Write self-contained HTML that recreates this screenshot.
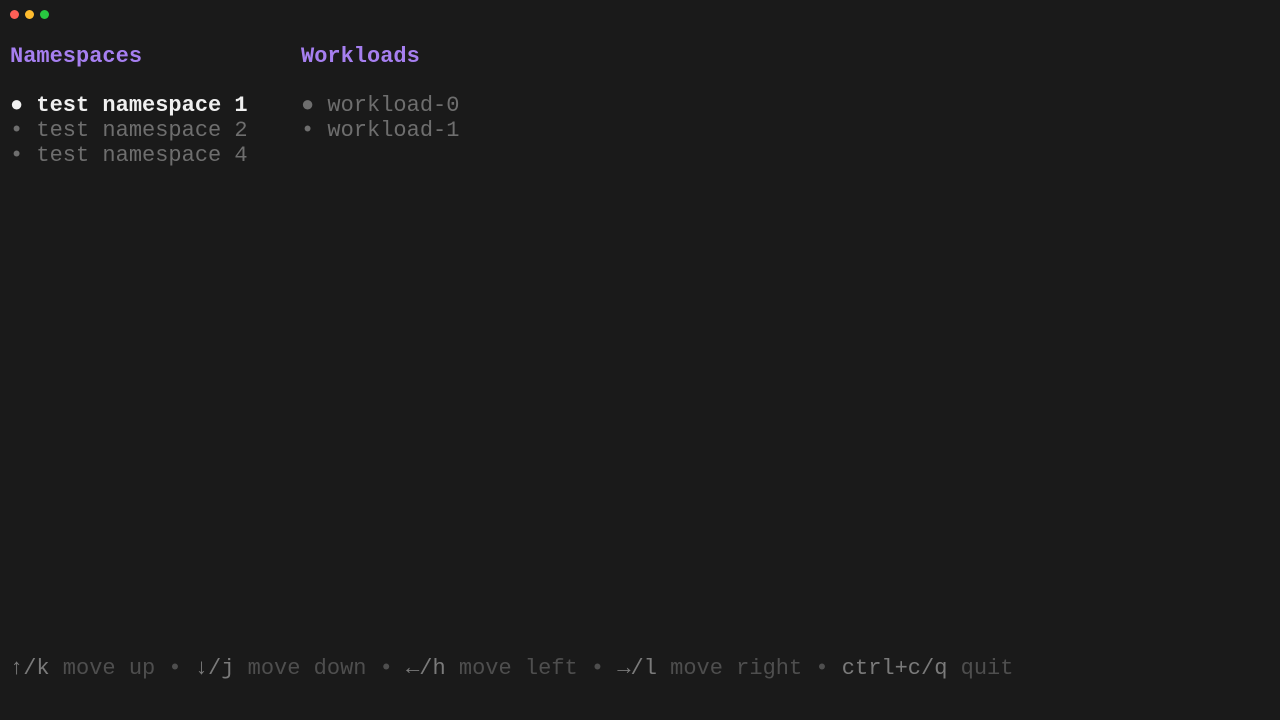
<!DOCTYPE html>
<html><head><meta charset="utf-8"><style>
html,body{margin:0;padding:0;background:#1a1a1a;width:1280px;height:720px;overflow:hidden}
body{font-family:"Liberation Mono",monospace;font-size:22px;line-height:24px;position:relative}
.l{position:absolute;white-space:pre;height:24px}
.dot{position:absolute;top:10px;width:9px;height:9px;border-radius:50%}
.t{color:#a67ff0;font-weight:bold}
.sel{color:#f0f0f0;font-weight:bold}
.g{color:#6e6e6e}
.k{color:#7a7a7a}.d{color:#4e4e4e}
</style></head><body>
<div class="dot" style="left:10px;background:#fe5f57"></div>
<div class="dot" style="left:25px;background:#febc2e"></div>
<div class="dot" style="left:40px;background:#28c840"></div>
<div class="l t" style="left:10px;top:45px">Namespaces</div>
<div class="l t" style="left:301px;top:45px">Workloads</div>
<div class="l sel" style="left:10px;top:94px">● test namespace 1</div>
<div class="l g" style="left:10px;top:119px">• test namespace 2</div>
<div class="l g" style="left:10px;top:144px">• test namespace 4</div>
<div class="l g" style="left:301px;top:94px">● workload-0</div>
<div class="l g" style="left:301px;top:119px">• workload-1</div>
<div class="l" style="left:10px;top:657px"><span class="k">↑/k</span><span class="d"> move up • </span><span class="k">↓/j</span><span class="d"> move down • </span><span class="k">←/h</span><span class="d"> move left • </span><span class="k">→/l</span><span class="d"> move right • </span><span class="k">ctrl+c/q</span><span class="d"> quit</span></div>
</body></html>
